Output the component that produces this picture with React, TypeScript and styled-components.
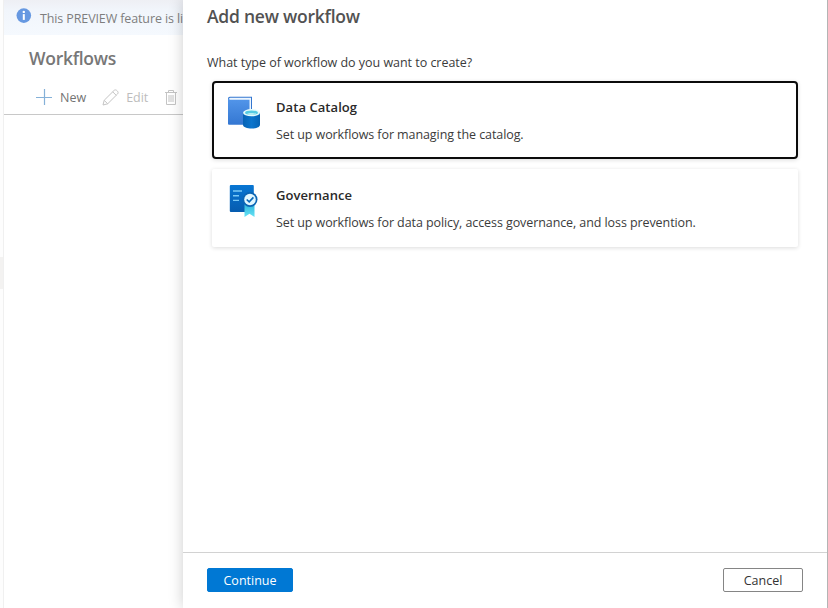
import React from 'react';
import styled, { createGlobalStyle } from 'styled-components';

const GlobalStyle = createGlobalStyle`
  * { box-sizing: border-box; }
  body {
    margin: 0;
    overflow: hidden;
    background: #fff;
    font-family: 'Open Sans', 'Noto Sans', sans-serif;
    font-size: 12.5px;
  }
`;

const Screen = styled.div`
  display: flex;
  width: 828px;
  height: 608px;
  overflow: hidden;
`;

const Rail = styled.div`
  flex: 0 0 4px;
  padding-top: 257px;
  border-right: 1px solid #f0f0f0;
  background: #fdfdfd;
`;

const RailSelection = styled.div`
  height: 32px;
  background: #f3f2f1;
`;

const Page = styled.main`
  flex: 0 0 179px;
  display: flex;
  flex-direction: column;
  overflow: hidden;
  white-space: nowrap;
`;

const Notice = styled.div`
  flex: 0 0 35px;
  display: flex;
  align-items: flex-start;
  padding: 7px 0 0 12px;
  gap: 8px;
  background: linear-gradient(#eeeff4, #f1f5fb 10px, #f5f9fe);
`;

const NoticeText = styled.span`
  font-size: 12.5px;
  line-height: 20px;
  padding-top: 2px;
  letter-spacing: -0.12px;
  color: #7e7e7e;
`;

const PageTitle = styled.h1`
  margin: 10px 0 0 25px;
  font-size: 17.5px;
  font-weight: 600;
  line-height: 26px;
  letter-spacing: -0.28px;
  color: #777;
`;

const Toolbar = styled.div`
  display: flex;
  align-items: center;
  height: 44px;
  padding: 9px 0 0 31px;
  border-bottom: 1px solid #c8c8c8;
`;

const ToolButton = styled.button<{ $disabled?: boolean }>`
  display: flex;
  align-items: center;
  gap: 7px;
  margin-right: 16px;
  padding: 0;
  border: 0;
  background: none;
  font: inherit;
  color: ${p => (p.$disabled ? '#bdbdbd' : '#737373')};
`;

const Panel = styled.section`
  position: relative;
  flex: 1;
  display: flex;
  flex-direction: column;
  background: #fff;
  border-right: 1px solid #b4b4b4;
  box-shadow: 0 0 14px rgba(0, 0, 0, 0.2);
`;

const PanelBody = styled.div`
  flex: 1;
  padding: 3px 29px 0 24px;
`;

const PanelTitle = styled.h2`
  margin: 0;
  font-size: 17.5px;
  font-weight: 600;
  line-height: 26px;
  color: #525252;
  letter-spacing: -0.24px;
`;

const Question = styled.p`
  margin: 24px 0 8px;
  line-height: 20px;
  color: #3b3b3b;
  letter-spacing: -0.03px;
`;

const Options = styled.div`
  display: flex;
  flex-direction: column;
  gap: 10px;
  margin-left: 5px;
`;

const OptionCard = styled.article<{ $selected?: boolean }>`
  display: flex;
  height: 78px;
  gap: 15px;
  padding: ${p => (p.$selected ? '12px 13px' : '14px 15px')};
  border: ${p => (p.$selected ? '2px solid #0b0b0b' : '0')};
  border-radius: ${p => (p.$selected ? '4px' : '2px')};
  box-shadow: 0 1px 4px rgba(0, 0, 0, 0.14);
`;

const OptionText = styled.div`
  display: flex;
  flex-direction: column;
  gap: 8px;
  padding-top: 2px;
  line-height: 20px;
`;

const OptionName = styled.strong`
  font-size: 13px;
  font-weight: 600;
  color: #292929;
  letter-spacing: 0.06px;
`;

const OptionDetail = styled.span`
  color: #3b3b3b;
  letter-spacing: -0.085px;
`;

const Footer = styled.footer`
  flex: 0 0 56px;
  display: flex;
  justify-content: space-between;
  align-items: flex-start;
  padding: 15px 24px 0;
  border-top: 1px solid #d2d2d2;
`;

const ActionButton = styled.button<{ $primary?: boolean }>`
  width: ${p => (p.$primary ? 86 : 80)}px;
  height: 24px;
  padding: 2px 0 0;
  border: 1px solid ${p => (p.$primary ? '#0078d4' : '#858585')};
  border-radius: 2px;
  background: ${p => (p.$primary ? '#0078d4' : '#fff')};
  color: ${p => (p.$primary ? '#fff' : '#333')};
  font: inherit;
  line-height: 20px;
`;

const InfoIcon = () => (
  <svg width="16" height="16" viewBox="0 0 16 16">
    <circle cx="7.8" cy="8.6" r="7.3" fill="#6698e1" />
    <circle cx="7.8" cy="4.9" r="1.2" fill="#fff" />
    <path d="M6.8 7.1h2v5.8h-2z" fill="#fff" />
  </svg>
);

const PlusIcon = () => (
  <svg width="18" height="16" viewBox="0 0 18 16">
    <path d="M9.5 0v16M1 8.5h16" stroke="#85b1d8" strokeWidth="1.2" />
  </svg>
);

const PencilIcon = () => (
  <svg width="17" height="17" viewBox="0 0 17 17" fill="none" stroke="#c4c4c4">
    <path d="M1 16l1.2-4.7L12 1.5c.8-.8 2-.8 2.8 0l.7.7c.8.8.8 2 0 2.8l-9.8 9.8zM2.2 11.3l3.5 3.5M10.7 2.8l3.5 3.5" />
  </svg>
);

const TrashIcon = () => (
  <svg width="14" height="17" viewBox="0 0 14 17" fill="none" stroke="#c4c4c4">
    <path d="M1 3.5h12M4.5 3.5v-2h5v2M2.5 3.5v12h9v-12M5 6v7M7 6v7M9 6v7" />
  </svg>
);

const CatalogIcon = () => (
  <svg width="34" height="34" viewBox="0 -0.7 34 34">
    <defs>
      <linearGradient id="book" x2="0" y2="1">
        <stop stopColor="#5396ea" />
        <stop offset="1" stopColor="#3477d2" />
      </linearGradient>
      <linearGradient id="drum">
        <stop stopColor="#0763b5" />
        <stop offset=".5" stopColor="#0b75cd" />
        <stop offset="1" stopColor="#0563b5" />
      </linearGradient>
    </defs>
    <path d="M1 2.8Q1 1 2.8 1H25v27H4z" fill="#3376cf" />
    <path d="M2 3Q2.2 2 3.4 2H24v24H4z" fill="#edf6ff" />
    <path d="M1 2.8l2 1.2h19.5V29H2q-1 0-1-1z" fill="url(#book)" />
    <path d="M16 17v12c0 5 17 5 17 0V17z" fill="url(#drum)" />
    <ellipse cx="24.5" cy="17" rx="8.5" ry="3.6" fill="#e4fbfc" />
    <ellipse cx="24.5" cy="17" rx="6.5" ry="2.3" fill="#55cbe2" />
    <path d="M19.6 18.3c2-1.5 7.8-1.5 9.8 0-2.2 1.4-7.6 1.4-9.8 0z" fill="#b4edf3" />
  </svg>
);

const GovernanceIcon = () => (
  <svg width="34" height="34" viewBox="0 0 34 34">
    <defs>
      <linearGradient id="document" x2="0" y2="1">
        <stop stopColor="#0876d3" />
        <stop offset="1" stopColor="#065caf" />
      </linearGradient>
      <linearGradient id="ribbon" x2="0" y2="1">
        <stop stopColor="#2eb5dc" />
        <stop offset="1" stopColor="#68e4f5" />
      </linearGradient>
    </defs>
    <rect x="2.8" y="2" width="24" height="27" rx="1" fill="url(#document)" />
    <path d="M6 8h9M6 12.7h6M6 17.4h6" stroke="#79c8f5" strokeWidth="1.4" />
    <path d="M17.5 21h10v13l-5-3.3-5 3.3z" fill="url(#ribbon)" />
    <circle cx="23" cy="16.5" r="7.5" fill="#0b65b4" />
    <circle cx="23" cy="16.5" r="5.8" fill="#e1f7ff" />
    <path d="M19.7 16.5l2.5 2.4 4.2-4.5" fill="none" stroke="#0867b8" strokeWidth="1.6" />
  </svg>
);

export default function App() {
  return (
    <>
      <GlobalStyle />
      <Screen>
        <Rail><RailSelection /></Rail>
        <Page>
          <Notice><InfoIcon /><NoticeText>This PREVIEW feature is li</NoticeText></Notice>
          <PageTitle>Workflows</PageTitle>
          <Toolbar>
            <ToolButton><PlusIcon />New</ToolButton>
            <ToolButton $disabled><PencilIcon />Edit</ToolButton>
            <ToolButton $disabled aria-label="Delete"><TrashIcon /></ToolButton>
          </Toolbar>
        </Page>
        <Panel>
          <PanelBody>
            <PanelTitle>Add new workflow</PanelTitle>
            <Question>What type of workflow do you want to create?</Question>
            <Options>
              <OptionCard $selected>
                <CatalogIcon />
                <OptionText>
                  <OptionName>Data Catalog</OptionName>
                  <OptionDetail>Set up workflows for managing the catalog.</OptionDetail>
                </OptionText>
              </OptionCard>
              <OptionCard>
                <GovernanceIcon />
                <OptionText>
                  <OptionName>Governance</OptionName>
                  <OptionDetail>Set up workflows for data policy, access governance, and loss prevention.</OptionDetail>
                </OptionText>
              </OptionCard>
            </Options>
          </PanelBody>
          <Footer>
            <ActionButton $primary>Continue</ActionButton>
            <ActionButton>Cancel</ActionButton>
          </Footer>
        </Panel>
      </Screen>
    </>
  );
}
